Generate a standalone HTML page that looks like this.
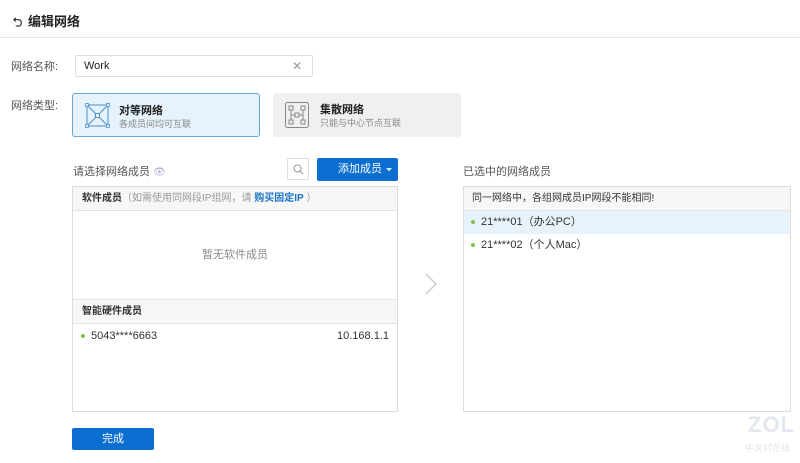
<!DOCTYPE html><html><head><meta charset="utf-8"><style>
*{box-sizing:border-box;margin:0;padding:0}
body{width:800px;height:463px;background:#fff;font-family:"Liberation Sans","Noto Sans CJK SC",sans-serif;color:#333;position:relative;overflow:hidden;font-size:12px}
.a{position:absolute}
.lbl{color:#555;font-size:11px}
.panel{border:1px solid #dcdcdc;background:#fff}
.ph{background:#f7f7f7;border-bottom:1px solid #e3e3e3;height:24px;line-height:23px;padding-left:9px;font-size:10px;color:#333}
.dot{display:inline-block;width:4px;height:4px;border-radius:50%;background:#7cc44a;vertical-align:middle;margin-right:6px}
</style></head><body>
<div class="a" style="left:13px;top:11px;font-size:13px;font-weight:bold;color:#222">
<svg width="11" height="11" viewBox="0 0 12 12" style="vertical-align:-1px;margin-right:4px"><path d="M3 2L1 4L3 6M1 4H7A4 4 0 0 1 7 11H3" fill="none" stroke="#333" stroke-width="1.3"/></svg>编辑网络</div>
<div class="a" style="left:0;top:37px;width:800px;border-top:1px solid #e5e5e5"></div>
<div class="a lbl" style="left:11px;top:58px">网络名称:</div>
<div class="a" style="left:75px;top:55px;width:238px;height:22px;border:1px solid #ddd;border-radius:2px;padding-left:8px;line-height:20px;font-size:11px;color:#222">Work<span style="position:absolute;right:10px;top:0;color:#999;font-size:12px">✕</span></div>
<div class="a lbl" style="left:11px;top:97px">网络类型:</div>
<div class="a" style="left:72px;top:93px;width:188px;height:44px;background:#e6f2fc;border:1px solid #6aa8d8;border-radius:3px">
<svg class="a" style="left:12px;top:9px" width="25" height="25" viewBox="0 0 25 25" fill="none" stroke="#4a90c8" stroke-width="1"><rect x="2" y="2" width="21" height="21"/><path d="M2 2L23 23M23 2L2 23"/><circle cx="2" cy="2" r="1.8" fill="#e6f2fc"/><circle cx="23" cy="2" r="1.8" fill="#e6f2fc"/><circle cx="2" cy="23" r="1.8" fill="#e6f2fc"/><circle cx="23" cy="23" r="1.8" fill="#e6f2fc"/><rect x="10.5" y="10.5" width="4" height="4" fill="#e6f2fc"/></svg>
<div class="a" style="left:46px;top:8px;font-size:11px;font-weight:bold;color:#222">对等网络</div>
<div class="a" style="left:46px;top:23px;font-size:9px;color:#888">各成员间均可互联</div></div>
<div class="a" style="left:273px;top:93px;width:188px;height:44px;background:#f0f0f0;border-radius:3px">
<svg class="a" style="left:12px;top:9px" width="24" height="26" viewBox="0 0 24 26" fill="none" stroke="#888" stroke-width="1"><rect x="0.5" y="0.5" width="23" height="25" rx="2"/><rect x="4" y="4" width="4" height="4"/><rect x="16" y="4" width="4" height="4"/><rect x="4" y="18" width="4" height="4"/><rect x="16" y="18" width="4" height="4"/><rect x="10" y="11" width="4" height="4"/><path d="M6 8V13H10M18 8V13H14M6 18V13M18 18V13"/></svg>
<div class="a" style="left:47px;top:8px;font-size:11px;font-weight:bold;color:#222">集散网络</div>
<div class="a" style="left:47px;top:23px;font-size:9px;color:#888">只能与中心节点互联</div></div>
<div class="a" style="left:73px;top:163px;font-size:11px;color:#555">请选择网络成员 <span style="color:#aac;font-size:10px">👁</span></div>
<div class="a" style="left:287px;top:158px;width:22px;height:22px;border:1px solid #ddd;border-radius:2px"><svg class="a" style="left:5px;top:5px" width="11" height="11" viewBox="0 0 11 11" fill="none" stroke="#999"><circle cx="4.5" cy="4.5" r="3.5"/><path d="M7 7L10 10"/></svg></div>
<div class="a" style="left:317px;top:158px;width:81px;height:23px;background:#0b6fd2;border-radius:2px;color:#fff;font-size:11px;line-height:23px"><span class="a" style="left:21px;top:0">添加成员</span><svg class="a" style="left:69px;top:10px" width="6" height="4" viewBox="0 0 6 4"><path d="M0 0H6L3 3.5Z" fill="#cfe3f7"/></svg></div>
<div class="a panel" style="left:72px;top:186px;width:326px;height:226px">
<div class="ph"><b style="font-weight:bold">软件成员</b><span style="color:#999">（如需使用同网段IP组网，请 </span><b style="color:#1a73c8">购买固定IP</b><span style="color:#999"> ）</span></div>
<div style="height:89px;border-bottom:1px solid #e3e3e3;text-align:center;line-height:89px;color:#888;font-size:11px">暂无软件成员</div>
<div class="ph" style="font-weight:bold">智能硬件成员</div>
<div style="height:24px;line-height:24px;padding:0 8px 0 8px;font-size:11px;color:#333"><span class="dot"></span>5043****6663<span style="float:right">10.168.1.1</span></div>
</div>
<svg class="a" style="left:424px;top:273px" width="14" height="22" viewBox="0 0 14 22" fill="none" stroke="#ccc" stroke-width="1.5"><path d="M2 1L12 11L2 21"/></svg>
<div class="a" style="left:463px;top:163px;font-size:11px;color:#555">已选中的网络成员</div>
<div class="a panel" style="left:463px;top:186px;width:328px;height:226px">
<div class="ph" style="padding-left:8px">同一网络中，各组网成员IP网段不能相同!</div>
<div style="height:23px;line-height:23px;background:#e8f2fb;padding-left:7px;font-size:11px"><span class="dot"></span>21****01（办公PC）</div>
<div style="height:23px;line-height:23px;padding-left:7px;font-size:11px"><span class="dot"></span>21****02（个人Mac）</div>
</div>
<div class="a" style="left:72px;top:428px;width:82px;height:22px;background:#0b6fd2;border-radius:2px;color:#fff;font-size:11px;line-height:22px;text-align:center">完成</div>
<div class="a" style="left:748px;top:412px;font-size:22px;font-weight:bold;color:#e2e6ee;letter-spacing:1px">ZOL</div>
<div class="a" style="left:745px;top:441px;font-size:9px;color:#e2e6ee">中关村在线</div>
</body></html>
